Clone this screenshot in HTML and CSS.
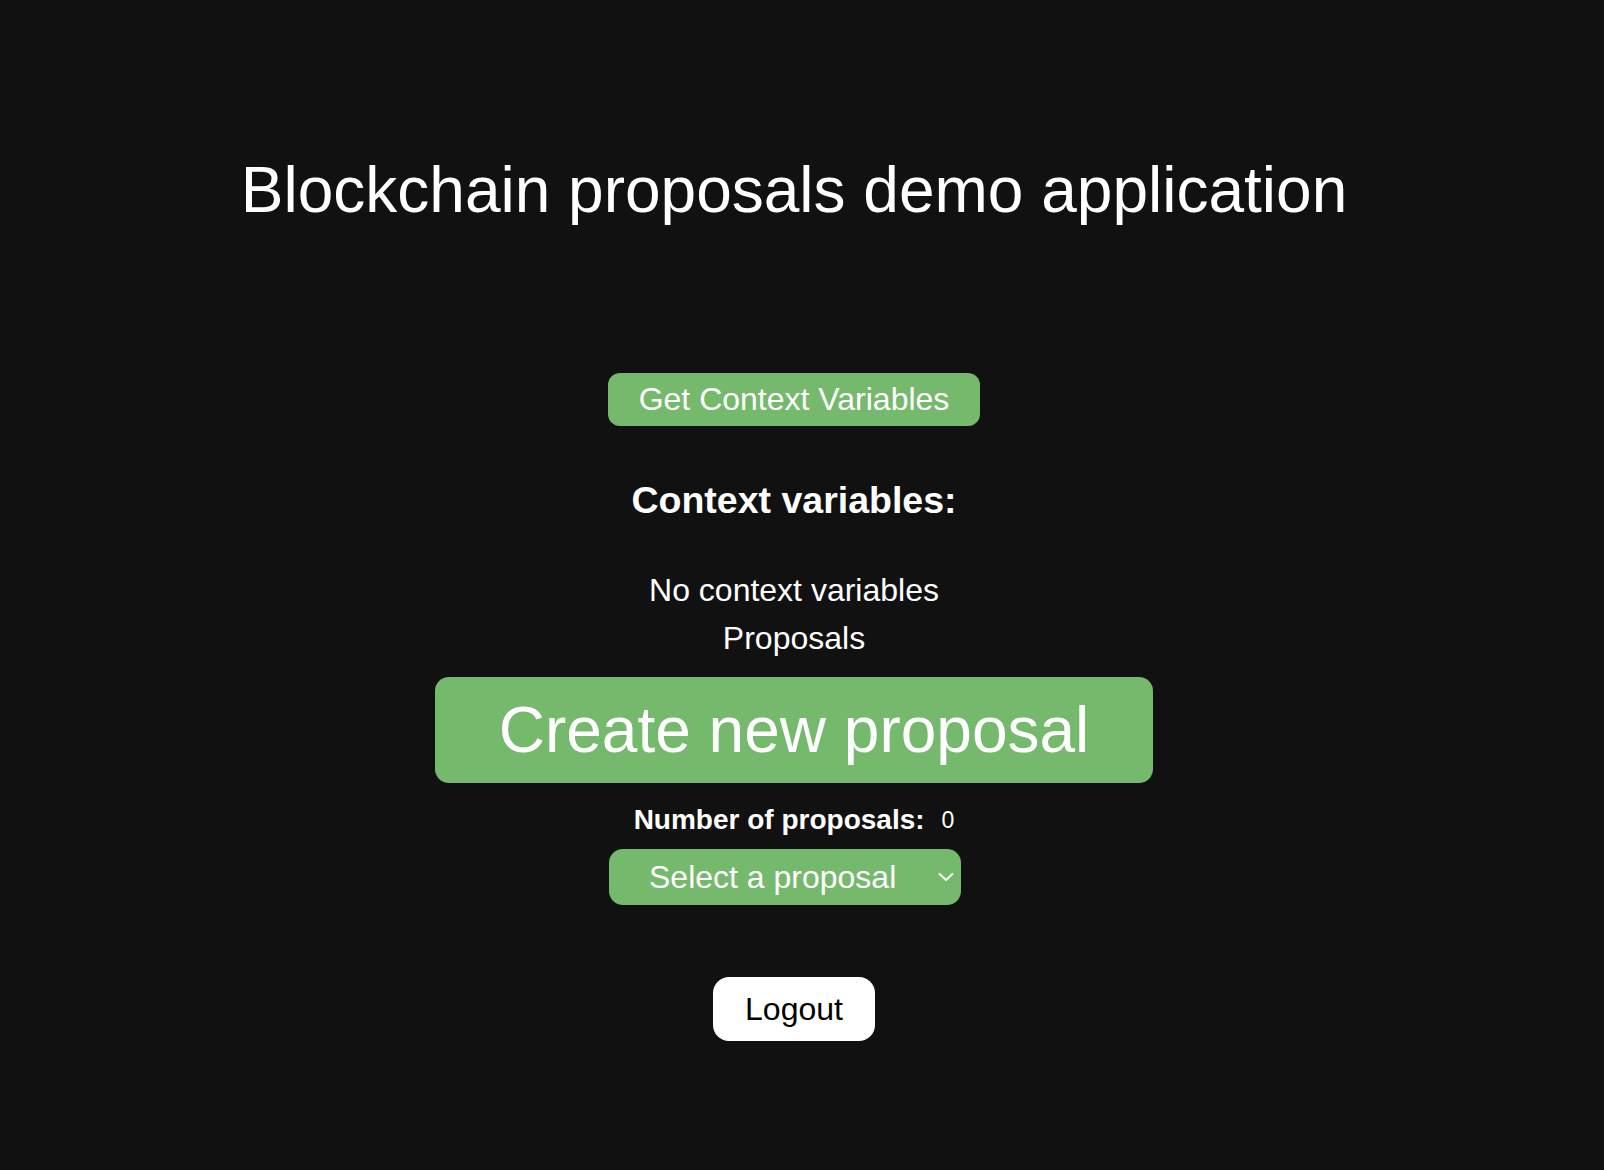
FILE: index.html
```html
<!DOCTYPE html>
<html lang="en">
<head>
<meta charset="utf-8">
<title>Blockchain proposals demo application</title>
<link rel="stylesheet" href="styles.css">
</head>
<body>
<main class="app">
  <h1 class="title">Blockchain proposals demo application</h1>
  <button class="btn btn-context">Get Context Variables</button>
  <h2 class="ctx-heading">Context variables:</h2>
  <div class="ctx-empty">No context variables</div>
  <div class="proposals-label">Proposals</div>
  <button class="btn btn-create">Create new proposal</button>
  <div class="count-row"><span class="count-label">Number of proposals:</span><span class="count-value">0</span></div>
  <div class="select-wrap">
    <select class="proposal-select">
      <option>Select a proposal</option>
    </select>
    <svg class="chevron" width="18" height="10" viewBox="0 0 18 10"><path d="M2 1.5 L9 8 L16 1.5" fill="none" stroke="#fff" stroke-width="2"/></svg>
  </div>
  <button class="btn btn-logout">Logout</button>
</main>
</body>
</html>
```
FILE: styles.css
```css
html, body {
  margin: 0;
  padding: 0;
  background: #111111;
}
body {
  font-family: "Liberation Sans", Arial, sans-serif;
  color: #ffffff;
}
.app {
  display: flex;
  flex-direction: column;
  align-items: center;
  padding: 150px 16px 100px 0;
}
.title {
  margin: 0;
  font-size: 64px;
  font-weight: 400;
  line-height: 80px;
}
.btn {
  font-family: "Liberation Sans", Arial, sans-serif;
  border: none;
  cursor: pointer;
}
.btn-context {
  margin-top: 143px;
  width: 372px;
  height: 53px;
  background: #75b96d;
  color: #fff;
  font-size: 32px;
  border-radius: 12px;
}
.ctx-heading {
  margin: 52px 0 0;
  font-size: 37.5px;
  font-weight: 700;
  line-height: 44px;
}
.ctx-empty {
  margin-top: 44px;
  font-size: 32px;
  line-height: 48px;
}
.proposals-label {
  font-size: 32px;
  line-height: 48px;
}
.btn-create {
  margin-top: 15px;
  width: 718px;
  height: 106px;
  background: #75b96d;
  color: #fff;
  font-size: 64px;
  border-radius: 14px;
}
.count-row {
  margin-top: 17px;
  display: flex;
  align-items: center;
  gap: 17px;
  line-height: 40px;
}
.count-label {
  font-size: 28px;
  font-weight: 700;
}
.count-value {
  font-size: 23px;
}
.select-wrap {
  position: relative;
  margin: 9px 18px 0 0;
  width: 352px;
  height: 56px;
}
.proposal-select {
  appearance: none;
  -webkit-appearance: none;
  width: 100%;
  height: 100%;
  border: none;
  border-radius: 14px;
  background: #75b96d;
  color: #fff;
  font-family: "Liberation Sans", Arial, sans-serif;
  font-size: 32px;
  padding: 0 0 0 40px;
}
.chevron {
  position: absolute;
  right: 6px;
  top: 23px;
  pointer-events: none;
}
.btn-logout {
  margin-top: 72px;
  width: 162px;
  height: 64px;
  background: #ffffff;
  color: #000;
  font-size: 32px;
  border-radius: 16px;
}
```
